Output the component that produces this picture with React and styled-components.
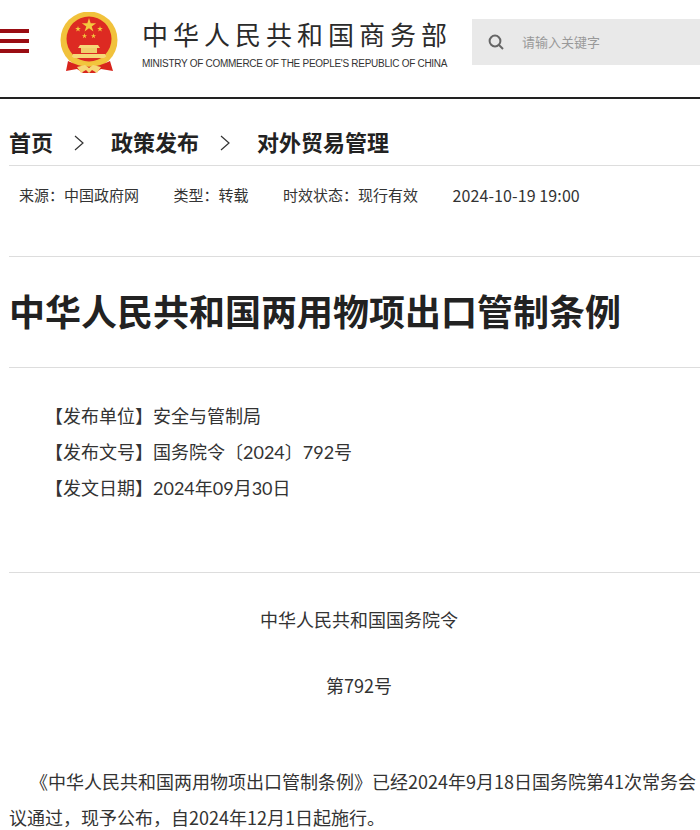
import React from "react";
import styled, { createGlobalStyle } from "styled-components";

const GlobalStyle = createGlobalStyle`
  html, body {
    margin: 0;
    padding: 0;
    background: #fff;
    overflow: hidden;
  }
  body {
    font-family: "Noto Sans CJK SC", "Liberation Sans", sans-serif;
    color: #222;
  }
`;

const Page = styled.div`
  width: 700px;
  height: 830px;
  overflow: hidden;
`;

const Header = styled.header`
  height: 97px;
  border-bottom: 2px solid #222;
  display: flex;
  align-items: flex-start;
`;

const Menu = styled.div`
  width: 29px;
  margin-top: 29px;
  display: flex;
  flex-direction: column;
  gap: 6px;
  flex: none;
`;

const MenuBar = styled.span`
  display: block;
  height: 4px;
  background: #9a0d13;
`;

const Emblem = styled.svg`
  width: 60px;
  height: 62px;
  margin: 12px 0 0 30px;
  flex: none;
`;

const Logo = styled.div`
  width: 310px;
  margin: 17px 0 0 23px;
  flex: none;
`;

const LogoName = styled.div`
  font-size: 26px;
  line-height: 34px;
  letter-spacing: 5px;
  color: #2b2b2b;
  white-space: nowrap;
`;

const LogoEnglish = styled.div`
  font-family: "Liberation Sans", sans-serif;
  font-size: 10px;
  letter-spacing: -0.28px;
  line-height: 12px;
  margin-top: 7px;
  color: #333;
  white-space: nowrap;
`;

const Search = styled.div`
  width: 228px;
  height: 46px;
  margin: 19px 0 0 20px;
  background: #e9e9e9;
  display: flex;
  align-items: center;
  flex: none;
`;

const SearchIcon = styled.svg`
  width: 16px;
  height: 16px;
  margin-left: 16px;
  flex: none;
`;

const Placeholder = styled.span`
  margin: 0 0 2px 18px;
  font-size: 13px;
  color: #999;
`;

const Content = styled.main`
  padding: 0 0 0 9px;
  width: 700px;
  box-sizing: border-box;
`;

const Crumbs = styled.nav`
  height: 67px;
  border-bottom: 1px solid #ddd;
  display: flex;
  align-items: center;
  padding-top: 17px;
  box-sizing: border-box;
`;

const Crumb = styled.span`
  font-size: 22px;
  font-weight: 700;
  line-height: 30px;
  color: #222;
`;

const Chevron = styled.svg`
  width: 12px;
  height: 16px;
  margin: 4px 26px 0 20px;
  flex: none;
`;

const Meta = styled.div`
  height: 91px;
  border-bottom: 1px solid #ddd;
  padding: 19px 0 0 10px;
  box-sizing: border-box;
  display: flex;
  line-height: 20px;
  color: #333;
`;

const MetaItem = styled.span`
  margin-right: 34.5px;
  white-space: nowrap;
  font-size: ${(p) => (p.$date ? "16px" : "15px")};
  letter-spacing: ${(p) => (p.$date ? "0.1px" : "0")};
`;

const Title = styled.h1`
  margin: 0;
  height: 111px;
  padding-bottom: 4px;
  box-sizing: border-box;
  border-bottom: 1px solid #ddd;
  display: flex;
  align-items: center;
  font-size: 36px;
  font-weight: 700;
  color: #222;
  white-space: nowrap;
`;

const Info = styled.div`
  height: 205px;
  border-bottom: 1px solid #ddd;
  padding-top: 30px;
  box-sizing: border-box;
  font-family: "Lato", "Noto Sans CJK SC", sans-serif;
  font-size: 18px;
  line-height: 36px;
  color: #333;
`;

const InfoRow = styled.div`
  padding-left: 36px;
  white-space: nowrap;
`;

const Body = styled.article`
  font-size: 18px;
  line-height: 36px;
  color: #333;
  padding-top: 28px;
  width: 700px;
`;

const Center = styled.p`
  margin: 0 0 30px;
  text-align: center;
`;

const Paragraph = styled.p`
  margin: 0;
  padding-top: 30px;
  text-indent: 21px;
  width: 690px;
`;

const starPoints = (cx, cy, r) =>
  Array.from({ length: 10 }, (_, i) => {
    const radius = i % 2 === 0 ? r : r * 0.38;
    const angle = (Math.PI / 5) * i - Math.PI / 2;
    return `${cx + radius * Math.cos(angle)},${cy + radius * Math.sin(angle)}`;
  }).join(" ");

const App = () => (
  <Page>
    <GlobalStyle />
    <Header>
      <Menu>
        <MenuBar />
        <MenuBar />
        <MenuBar />
      </Menu>
      <Emblem viewBox="0 0 60 62">
        <circle cx="30" cy="28" r="28.5" fill="#f1c23c" />
        <circle cx="30" cy="27" r="22.5" fill="#dd2a22" />
        <polygon points={starPoints(30, 13.5, 7.5)} fill="#f4c93f" />
        <polygon points={starPoints(19, 17, 3)} fill="#f4c93f" />
        <polygon points={starPoints(41, 17, 3)} fill="#f4c93f" />
        <polygon points={starPoints(25.5, 24, 2.8)} fill="#f4c93f" />
        <polygon points={starPoints(34.5, 24, 2.8)} fill="#f4c93f" />
        <path d="M21 33 H39 L41 36 H19 Z" fill="#f6d878" />
        <path d="M22 36 H38 V41 H22 Z" fill="#f0cf6a" />
        <path d="M14 42 H46 L48 46 H12 Z" fill="#f6d878" />
        <path d="M9 49 Q30 60 51 49 L54 59 L42 57 L36 61 L24 61 L18 57 L7 59 Z" fill="#d8241c" />
        <path d="M12 44 Q30 58 48 44 L50 47 Q30 62 10 47 Z" fill="#f2c53d" />
        <path d="M18 55 L26 53 L30 56 L34 53 L42 55 L38 61 L33 58 L30 61 L27 58 L22 61 Z" fill="#f6d878" />
      </Emblem>
      <Logo>
        <LogoName>中华人民共和国商务部</LogoName>
        <LogoEnglish>MINISTRY OF COMMERCE OF THE PEOPLE'S REPUBLIC OF CHINA</LogoEnglish>
      </Logo>
      <Search>
        <SearchIcon viewBox="0 0 16 16" fill="none" stroke="#666" strokeWidth="2">
          <circle cx="7" cy="7" r="5.4" />
          <path d="M11 11 L15 15" />
        </SearchIcon>
        <Placeholder>请输入关键字</Placeholder>
      </Search>
    </Header>
    <Content>
      <Crumbs>
        <Crumb>首页</Crumb>
        <Chevron viewBox="0 0 12 16" fill="none" stroke="#333" strokeWidth="1.2">
          <path d="M2 1 L10 8 L2 15" />
        </Chevron>
        <Crumb>政策发布</Crumb>
        <Chevron viewBox="0 0 12 16" fill="none" stroke="#333" strokeWidth="1.2">
          <path d="M2 1 L10 8 L2 15" />
        </Chevron>
        <Crumb>对外贸易管理</Crumb>
      </Crumbs>
      <Meta>
        <MetaItem>来源：中国政府网</MetaItem>
        <MetaItem>类型：转载</MetaItem>
        <MetaItem>时效状态：现行有效</MetaItem>
        <MetaItem $date>2024-10-19 19:00</MetaItem>
      </Meta>
      <Title>中华人民共和国两用物项出口管制条例</Title>
      <Info>
        <InfoRow>【发布单位】安全与管制局</InfoRow>
        <InfoRow>【发布文号】国务院令〔2024〕792号</InfoRow>
        <InfoRow>【发文日期】2024年09月30日</InfoRow>
      </Info>
      <Body>
        <Center>中华人民共和国国务院令</Center>
        <Center>第792号</Center>
        <Paragraph>
          《中华人民共和国两用物项出口管制条例》已经2024年9月18日国务院第41次常务会议通过，现予公布，自2024年12月1日起施行。
        </Paragraph>
      </Body>
    </Content>
  </Page>
);

export default App;
